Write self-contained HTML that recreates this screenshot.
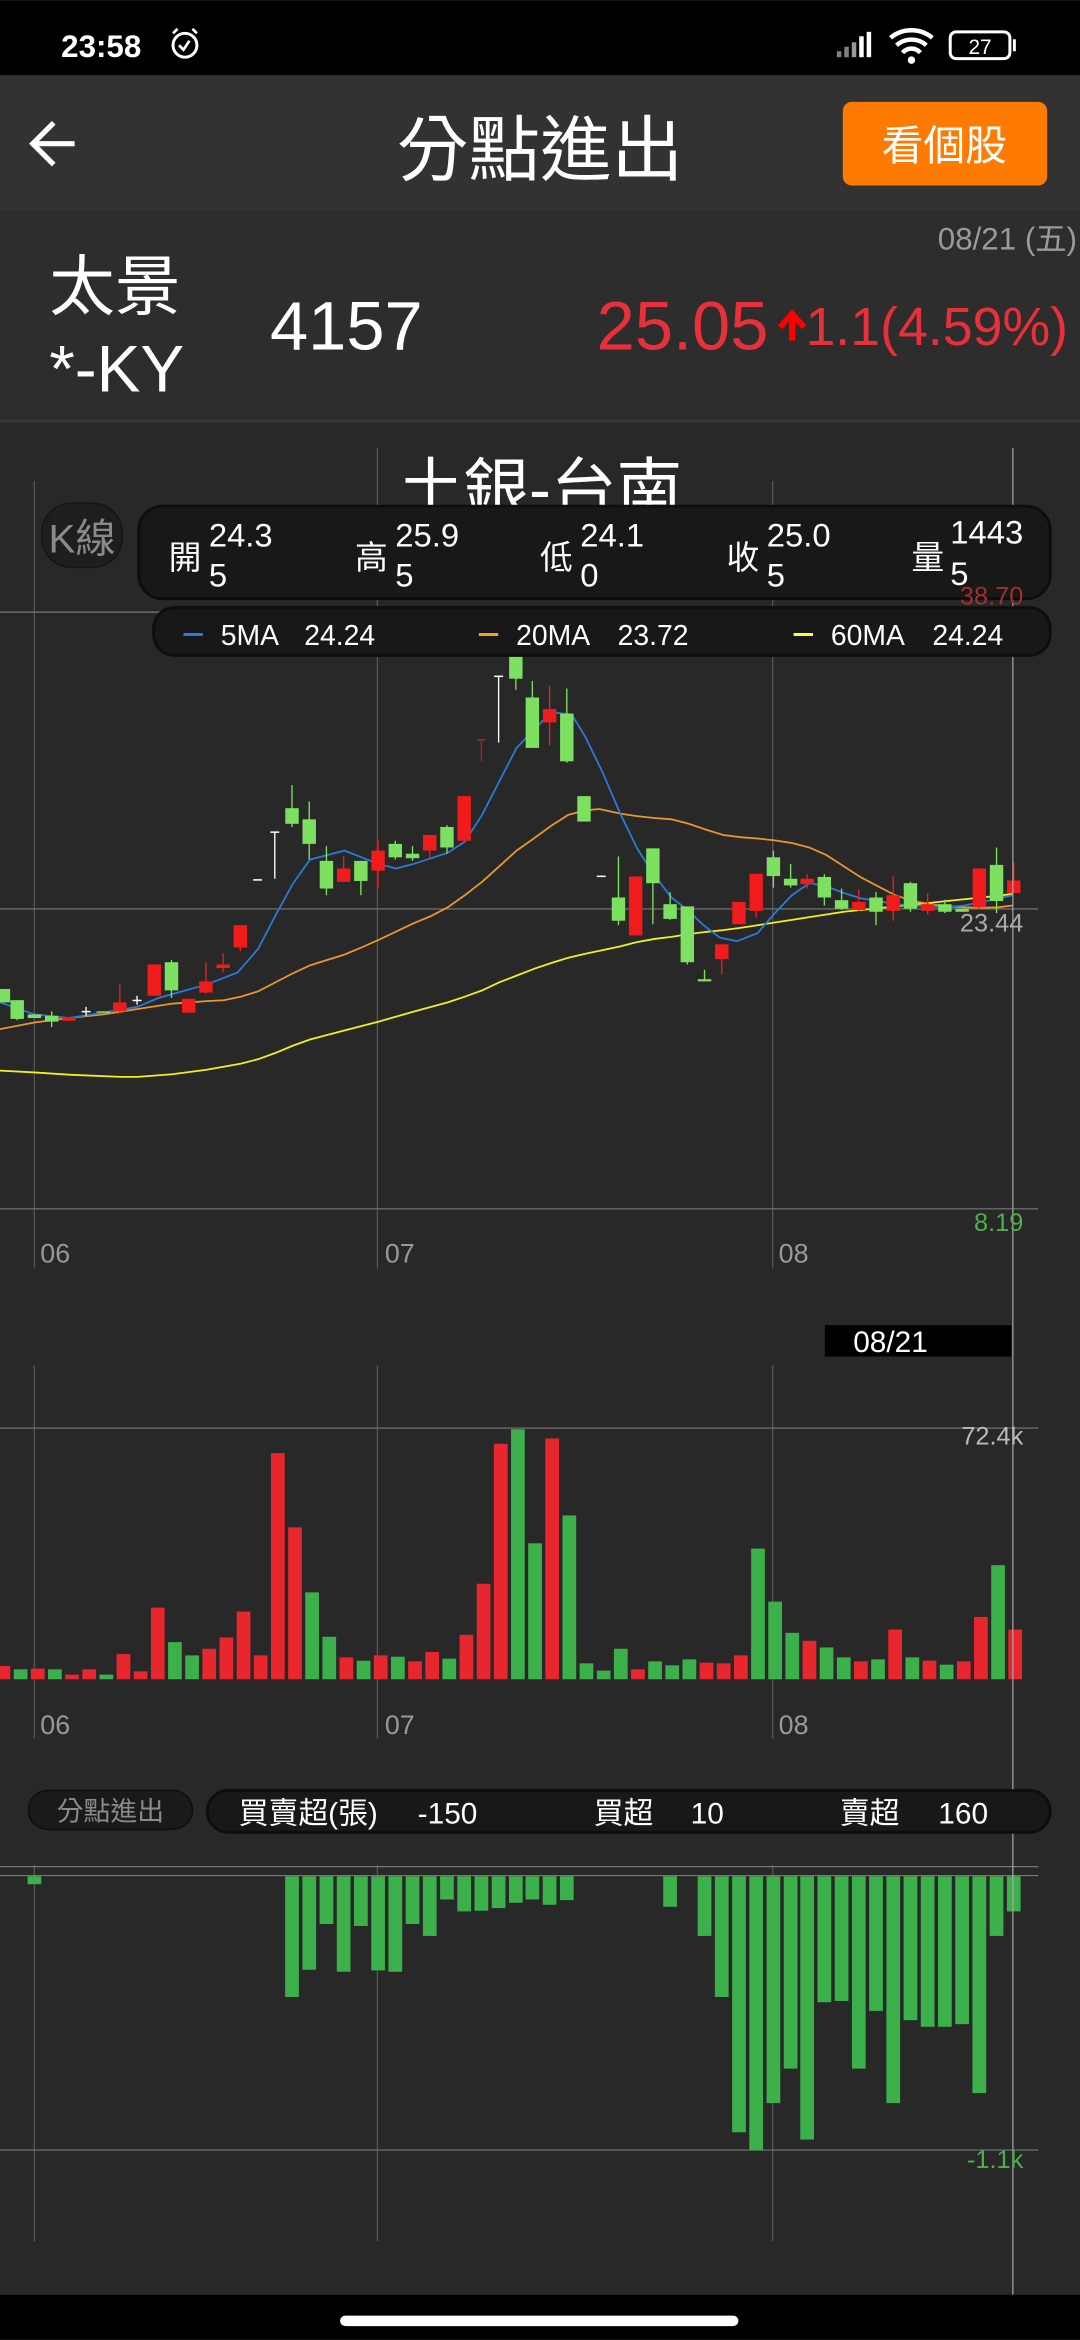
<!DOCTYPE html>
<html><head><meta charset="utf-8"><style>
html,body{margin:0;padding:0;background:#282828;width:1080px;height:2340px;overflow:hidden}
svg{display:block}
text{font-family:"Liberation Sans","Noto Sans CJK TC",sans-serif}
</style></head><body>
<svg id="s" width="1080" height="2340" viewBox="0 0 724 1568" xmlns="http://www.w3.org/2000/svg">
<rect x="0" y="0" width="724" height="1568" fill="#282828"/>
<rect x="0" y="0" width="724" height="50" fill="#000"/>
<text x="41" y="38" fill="#fff" font-size="21" font-weight="bold">23:58</text>
<circle cx="124" cy="30" r="8" fill="none" stroke="#fff" stroke-width="2"/>
<path d="M120 30l3 3 4-6M116 22l3-3M132 22l-3-3" stroke="#fff" stroke-width="1.8" fill="none"/>
<g fill="#fff"><rect x="561" y="34" width="3" height="4" opacity=".5"/><rect x="566" y="31" width="3" height="7" opacity=".5"/><rect x="571" y="28" width="3" height="10" opacity=".6"/><rect x="576" y="24" width="3" height="14"/><rect x="581" y="21" width="3" height="17"/></g>
<path d="M597 25a22 22 0 0 1 28 0M601 30a15 15 0 0 1 20 0M605 35a8 8 0 0 1 12 0" stroke="#fff" stroke-width="3" fill="none"/><circle cx="611" cy="40" r="2.5" fill="#fff"/>
<rect x="637" y="21" width="40" height="18" rx="4" fill="none" stroke="#fff" stroke-width="2"/><rect x="679" y="26" width="2" height="8" fill="#fff"/>
<text x="657" y="36" fill="#fff" font-size="14" text-anchor="middle">27</text>

<rect x="0" y="50" width="724" height="91" fill="#323232"/>
<path d="M50 96H22M36 82L22 96l14 14" stroke="#fff" stroke-width="3.5" fill="none"/>
<text x="362" y="117" fill="#fff" font-size="48" text-anchor="middle">分點進出</text>
<rect x="565" y="68" width="137" height="56" rx="6" fill="#ff7a00"/>
<text x="633" y="107" fill="#fff" font-size="28" text-anchor="middle">看個股</text>

<rect x="0" y="141" width="724" height="140" fill="#2d2d2d"/>
<rect x="0" y="281" width="724" height="2" fill="#383838"/>
<text x="722" y="167" fill="#9a9a9a" font-size="21" text-anchor="end">08/21 (五)</text>
<text x="33" y="207" fill="#fff" font-size="44">太景</text>
<text x="33" y="262" fill="#fff" font-size="44">*-KY</text>
<text x="181" y="234" fill="#fff" font-size="46">4157</text>
<text x="400" y="234" fill="#e8303a" font-size="46">25.05</text>
<path d="M531 228v-16M523 219l8-9 8 9" stroke="#f00" stroke-width="4" fill="none"/>
<text x="716" y="231" fill="#e8303a" font-size="36" text-anchor="end">1.1(4.59%)</text>

<g stroke="#5a5a5a" stroke-width="0.8">
<line x1="23" y1="322" x2="23" y2="850"/><line x1="253" y1="300" x2="253" y2="850"/><line x1="518" y1="322" x2="518" y2="850"/>
<line x1="23" y1="915" x2="23" y2="1165"/><line x1="253" y1="915" x2="253" y2="1165"/><line x1="518" y1="915" x2="518" y2="1165"/>
<line x1="23" y1="1250" x2="23" y2="1502"/><line x1="253" y1="1250" x2="253" y2="1502"/><line x1="518" y1="1250" x2="518" y2="1502"/>
</g>
<g stroke="#777" stroke-width="0.8">
<line x1="0" y1="410" x2="696" y2="410"/><line x1="0" y1="609" x2="696" y2="609"/><line x1="0" y1="810" x2="696" y2="810"/>
<line x1="0" y1="957" x2="696" y2="957"/>
<line x1="0" y1="1251" x2="696" y2="1251"/><line x1="0" y1="1257" x2="696" y2="1257"/><line x1="0" y1="1441" x2="696" y2="1441"/>
</g>
<text x="362" y="343" fill="#fff" font-size="44" text-anchor="middle">土銀-台南</text>

<g id="kc"></g>
<g id="vol"></g>
<g id="net"></g>

<line x1="679" y1="300" x2="679" y2="1538" stroke="#aaa" stroke-width="0.8"/>

<rect x="28" y="337" width="54" height="43" rx="20" fill="#1e1e1e" stroke="#151515"/>
<text x="55" y="370" fill="#8a8a8a" font-size="27" text-anchor="middle">K線</text>
<rect x="93" y="339" width="611" height="62" rx="16" fill="#181818" stroke="#0e0e0e" stroke-width="2"/>
<g fill="#fff" font-size="22">
<text x="113" y="381">開</text><text x="140" y="366">24.3</text><text x="140" y="393">5</text>
<text x="238" y="381">高</text><text x="265" y="366">25.9</text><text x="265" y="393">5</text>
<text x="362" y="381">低</text><text x="389" y="366">24.1</text><text x="389" y="393">0</text>
<text x="487" y="381">收</text><text x="514" y="366">25.0</text><text x="514" y="393">5</text>
<text x="611" y="381">量</text><text x="637" y="364">1443</text><text x="637" y="392">5</text>
</g>
<text x="686" y="405" fill="#a03030" font-size="17" text-anchor="end">38.70</text>
<rect x="103" y="407" width="601" height="32" rx="14" fill="#181818" stroke="#0e0e0e" stroke-width="2"/>
<g font-size="19" fill="#fff">
<line x1="123" y1="425" x2="136" y2="425" stroke="#2a7ad8" stroke-width="2"/><text x="148" y="432">5MA</text><text x="204" y="432">24.24</text>
<line x1="321" y1="425" x2="334" y2="425" stroke="#f0a030" stroke-width="2"/><text x="346" y="432">20MA</text><text x="414" y="432">23.72</text>
<line x1="532" y1="425" x2="545" y2="425" stroke="#ffff30" stroke-width="2"/><text x="557" y="432">60MA</text><text x="625" y="432">24.24</text>
</g>
<text x="686" y="624" fill="#aaa" font-size="17" text-anchor="end">23.44</text>
<text x="686" y="825" fill="#4caf50" font-size="17" text-anchor="end">8.19</text>
<g fill="#999" font-size="18"><text x="27" y="846">06</text><text x="258" y="846">07</text><text x="522" y="846">08</text>
<text x="27" y="1162">06</text><text x="258" y="1162">07</text><text x="522" y="1162">08</text></g>

<rect x="553" y="888" width="125" height="21" fill="#000"/>
<text x="597" y="906" fill="#fff" font-size="20" text-anchor="middle">08/21</text>
<text x="686" y="968" fill="#bbb" font-size="17" text-anchor="end">72.4k</text>

<rect x="19" y="1200" width="110" height="26" rx="13" fill="#1a1a1a" stroke="#0e0e0e"/>
<text x="74" y="1220" fill="#8a8a8a" font-size="18" text-anchor="middle">分點進出</text>
<rect x="139" y="1200" width="565" height="28" rx="14" fill="#181818" stroke="#0e0e0e" stroke-width="2"/>
<g fill="#fff" font-size="20"><text x="160" y="1222">買賣超(張)</text><text x="280" y="1222">-150</text><text x="398" y="1222">買超</text><text x="463" y="1222">10</text><text x="563" y="1222">賣超</text><text x="629" y="1222">160</text></g>
<text x="686" y="1453" fill="#4caf50" font-size="17" text-anchor="end">-1.1k</text>

<rect x="0" y="1538" width="724" height="30" fill="#000"/>
<rect x="228" y="1552" width="267" height="7" rx="3.5" fill="#fff"/>
</svg>
<script>
var NS="http://www.w3.org/2000/svg";
function el(p,t,a){var e=document.createElementNS(NS,t);for(var k in a)e.setAttribute(k,a[k]);p.appendChild(e);return e;}
var X=function(z){return z/2.166;},KY=function(z){return 388.8+z/3.341;},VY=function(z){return 871.5+z/2.249;};
var R="#f01c1c",G="#7ee060",W="#fff";
var kc=document.getElementById("kc");
function line(pts,c){var d="";for(var i=0;i<pts.length;i+=2)d+=(i?"L":"M")+X(pts[i]).toFixed(1)+" "+KY(pts[i+1]).toFixed(1);el(kc,"path",{d:d,stroke:c,"stroke-width":1.2,fill:"none"});}
line([0,1098,50,1102,100,1107,175,1112,200,1112,250,1106,300,1096,350,1082,375,1072,400,1058,425,1042,450,1028,500,1008,550,988,600,966,650,945,675,932,700,918,725,900,750,885,775,870,800,857,825,845,850,836,875,828,900,820,925,810,950,803,975,798,1000,792,1025,787,1050,783,1075,778,1100,772,1125,766,1150,760,1175,754,1200,748,1225,742,1250,738,1275,734,1300,730,1325,726,1350,722,1375,718,1400,714,1425,710,1450,706,1470,702],"#f0f020");
line([0,1005,50,990,100,980,150,972,200,960,250,948,300,942,325,940,350,932,375,920,425,880,450,862,500,838,525,822,550,805,600,768,625,752,650,732,675,705,700,675,725,640,750,605,775,578,800,550,825,525,850,515,870,512,900,522,925,528,950,532,975,535,1000,545,1025,558,1050,570,1075,575,1100,578,1125,582,1150,588,1175,598,1200,615,1225,640,1250,665,1275,685,1300,705,1325,718,1350,725,1375,730,1400,732,1425,733,1450,732,1470,728],"#e8962c");
line([0,945,50,972,100,980,150,968,200,955,230,935,300,905,345,878,375,825,400,750,425,680,450,625,500,605,525,620,550,635,575,645,600,635,650,610,675,585,700,525,725,450,750,375,775,335,800,295,830,300,850,350,875,430,900,520,925,600,950,660,975,710,1000,740,1020,770,1045,800,1070,808,1100,790,1125,745,1150,705,1175,678,1200,685,1225,700,1250,712,1275,718,1300,725,1325,728,1350,730,1375,732,1400,728,1425,720,1450,712,1470,705],"#2a7ad8");
var C=[[5,G,915,945],[25,G,940,982,940,985],[50,G,972,980],[75,G,975,988,965,1000],[100,R,978,986],[125,W,964,966,955,975],[150,G,965,968],[174,R,945,965,905,970],[199,W,939,941,930,950],[224,R,860,930],[249,G,855,918,850,935],[274,R,937,968],[299,R,898,923,855,925],[324,R,860,868,835,878],[349,R,772,822,772,830],[374,W,669,671],[399,W,562,565,562,668],[424,G,510,545,458,552],[449,G,535,590,495,625],[474,G,628,690,595,705],[499,R,645,675,618,675],[524,G,628,673,628,705],[549,R,605,650,580,690],[574,G,590,620,583,625],[599,G,612,622,595,628],[624,R,570,605,570,625],[649,G,552,598,548,612],[674,R,483,583],[699,"#b02020",355,358,355,405],[724,W,213,216,213,363],[749,G,110,220,70,245],[773,G,262,375,225,375],[798,R,288,318,236,370],[823,G,298,405,242,408],[848,G,483,540],[873,W,661,664],[898,G,710,762,618,772],[923,R,663,795],[948,G,600,678,600,770],[973,G,725,758,698,760],[998,G,730,855,730,860],[1023,G,893,898,872,898],[1048,R,815,848,815,882],[1073,R,720,770],[1098,R,657,740,657,755],[1123,G,620,662,605,688],[1148,G,668,683,635,688],[1172,R,668,680,658,690],[1197,G,664,710,658,728],[1222,G,716,735,690,738],[1247,R,720,738,692,740],[1272,G,710,742,698,772],[1297,R,705,740,662,762],[1322,G,678,735,675,742],[1347,R,725,740,700,748],[1372,G,725,742,715,745],[1397,G,735,742],[1422,R,645,732,645,735],[1447,G,637,718,598,745],[1472,R,672,700,632,700]];
C.forEach(function(c){var x=X(c[0]);var wt=c[4]||c[2],wb=c[5]||c[3];el(kc,"line",{x1:x,x2:x,y1:KY(wt),y2:KY(wb),stroke:c[1],"stroke-width":0.9});var w=(c[1]==W||c[1]=="#b02020")?6:9;el(kc,"rect",{x:x-w/2,y:KY(c[2]),width:w,height:Math.max(1,KY(c[3])-KY(c[2])),fill:c[1]});});
var vg=document.getElementById("vol");
var VC="rgrgrrgrrrggrrrrrrggrgrgrrgrrrggrggggrgggrrrgggrggrgrgrgrrgr";
var VT=[551,556,555,556,564,556,564,533,559,463,515,535,525,508,469,535,230,342,440,507,538,543,535,537,544,530,540,504,427,216,194,366,208,324,547,558,525,556,544,550,541,546,547,535,374,454,501,513,523,538,544,541,496,538,543,549,544,477,399,496];
var VR="#e8262e",VG="#3cb04a";
VT.forEach(function(t,i){var xz=5+24.9*i;var x=X(xz);el(vg,"rect",{x:x-4.6,y:VY(t),width:9.2,height:VY(571)-VY(t),fill:VC[i]=="r"?VR:VG});});
var ng=document.getElementById("net");
var N=[[50,880],[424,1050],[449,1009],[474,940],[499,1012],[524,943],[549,1010],[574,1012],[599,940],[624,958],[649,903],[674,921],[699,920],[724,916],[749,908],[773,903],[798,911],[823,904],[973,914],[1023,958],[1048,1050],[1073,1254],[1098,1281],[1123,1210],[1148,1158],[1172,1265],[1197,1058],[1222,1056],[1247,1158],[1272,1071],[1297,1210],[1322,1085],[1347,1095],[1372,1095],[1397,1091],[1422,1195],[1447,958],[1472,921]];
N.forEach(function(n){var x=X(n[0]);el(ng,"rect",{x:x-4.6,y:VY(868),width:9.2,height:VY(n[1])-VY(868),fill:VG});});
</script>
</body></html>
